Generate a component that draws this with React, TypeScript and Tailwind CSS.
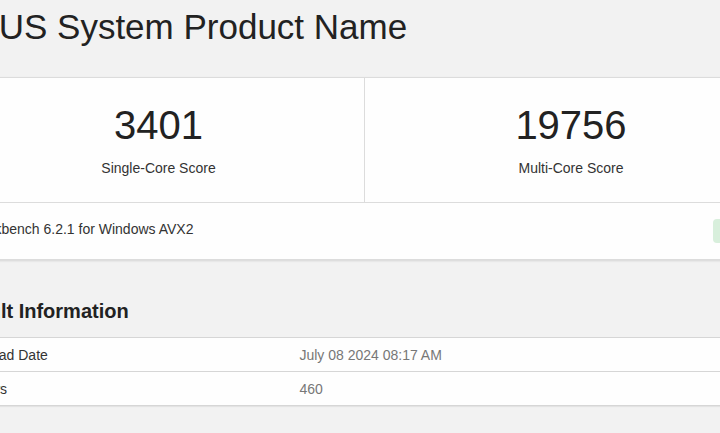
const scores = [
  { value: "3401", label: "Single-Core Score" },
  { value: "19756", label: "Multi-Core Score" },
];

const info = [
  { name: "Upload Date", value: "July 08 2024 08:17 AM" },
  { name: "Views", value: "460" },
];

export default function App() {
  return (
    <div
      className="h-screen overflow-hidden bg-[#f2f2f2] text-[#333]"
      style={{ fontFamily: '"Liberation Sans", Arial, sans-serif' }}
    >
      <div className="ml-[-48px] w-[826px]">
        <h1 className="pt-[6px] text-[35px] leading-[42px] text-[#222]">
          ASUS System Product Name
        </h1>

        {/* score card */}
        <div className="mt-[29px] border border-[#dcdcdc] bg-[#fefefe] shadow-[0_1px_2px_rgba(0,0,0,0.12)]">
          <div className="grid grid-cols-2 border-b border-[#dcdcdc]">
            {scores.map((s, i) => (
              <div
                key={s.label}
                className={
                  "flex flex-col items-center pt-[23px] pb-[24px] " +
                  (i === 0 ? "border-r border-[#dcdcdc]" : "")
                }
              >
                <div className="text-[40px] leading-[48px] text-[#222]">{s.value}</div>
                <div className="mt-[9px] text-[14px] leading-[20px] text-[#333]">
                  {s.label}
                </div>
              </div>
            ))}
          </div>
          <div className="flex items-start justify-between px-[15px] py-[16px]">
            <div className="text-[14px] leading-[20px] text-[#333]">
              Geekbench 6.2.1 for Windows AVX2
            </div>
            <span className="flex h-[24px] w-[49px] items-center justify-center rounded-[4px] bg-[#d8efdc] text-[12px] text-[#3c763d]">
              Valid
            </span>
          </div>
        </div>

        {/* result information */}
        <h2 className="mt-[39px] text-[20px] font-bold leading-[24px] text-[#222]">
          Result Information
        </h2>
        <div className="mt-[14px] border-t border-[#d6d6d6] bg-[#fefefe] shadow-[0_1px_1px_rgba(0,0,0,0.06)]">
          {info.map((row) => (
            <div
              key={row.name}
              className="flex h-[34px] items-center border-b border-[#d6d6d6] text-[14px] leading-[20px]"
            >
              <div className="w-[40%] pl-[18px] text-[#333]">{row.name}</div>
              <div className="pl-[17px] text-[#777]">{row.value}</div>
            </div>
          ))}
        </div>
      </div>
    </div>
  );
}
